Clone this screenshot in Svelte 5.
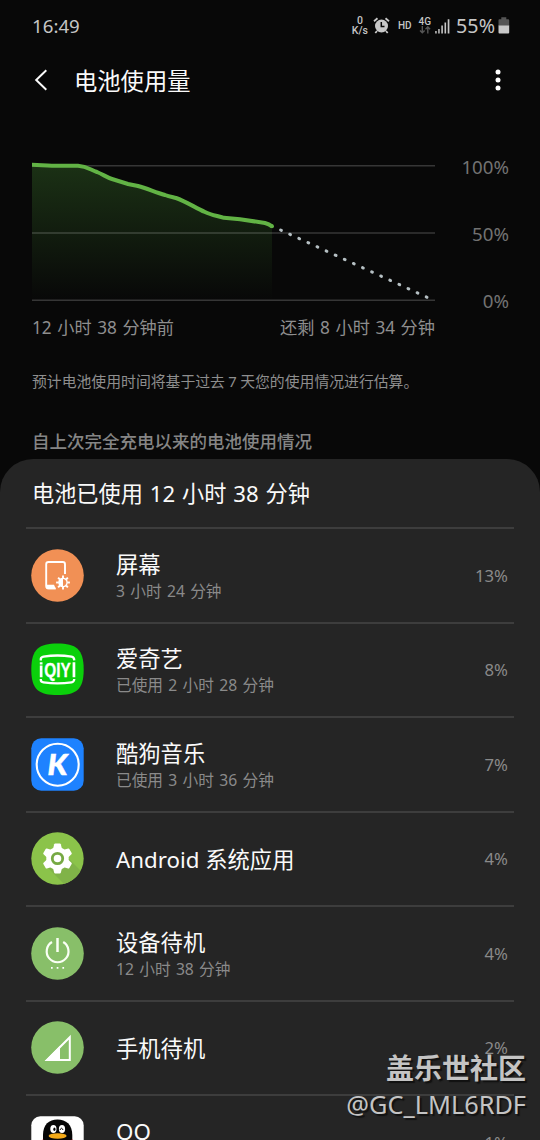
<script lang="ts">
    type Usage = { icon: string; name: string; detail?: string; percent: number };

    const apps: Usage[] = [
        { icon: "screen", name: "屏幕", detail: "3 小时 24 分钟", percent: 13 },
        { icon: "iqiyi", name: "爱奇艺", detail: "已使用 2 小时 28 分钟", percent: 8 },
        { icon: "kugou", name: "酷狗音乐", detail: "已使用 3 小时 36 分钟", percent: 7 },
        { icon: "android", name: "Android 系统应用", percent: 4 },
        { icon: "idle", name: "设备待机", detail: "12 小时 38 分钟", percent: 4 },
        { icon: "cell", name: "手机待机", percent: 2 },
        // blank detail keeps the name on the upper line
        { icon: "qq", name: "QQ", detail: "\u00a0", percent: 1 },
    ];

    const curve =
        "M0 9.8 C8 9.8 12 10.7 20 10.7 L46 10.7 C55 11.2 58 14.5 65 17 C71 19.5 75 22.5 80 24 L96 29 L106 31 C115 33.5 123 37 133 40 C137 41.5 140 42 144 43 C154 46.5 163 52.5 173 57 C179 60 184 60.5 192 62.8 L208 64.2 L233 68 Q237 69 240 71.3";

    const dots = Array.from({ length: 17 }, (_, i) => ({
        x: 249 + i * 9.1,
        y: 75.2 + i * 4.18,
    }));
    const rays = [0, 45, 90, 135, 180, 225, 270, 315];
    const teeth = [0, 60, 120, 180, 240, 300];
</script>

{#snippet appIcon(kind: string)}
    <svg class="icon" viewBox="0 0 53 53">
        {#if kind === "screen"}
            <circle cx="26.5" cy="26.5" r="26.3" fill="#f19055" />
            <path d="M24.5 39.4H17.5Q15.2 39.4 15.2 37V15.3Q15.2 13 17.5 13H31.8Q34 13 34 15.3V25" fill="none" stroke="#fff" stroke-width="1.9" />
            <path d="M15 35.7H23L25 40.3H17.5Q15 40.3 15 37.5Z" fill="#fff" />
            <g transform="translate(32 33.5)">
                {#each rays as angle}
                    <path d="M0 -4.3V-6.9" stroke="#fff" stroke-width="1.9" transform="rotate({angle})" />
                {/each}
                <circle r="4.1" fill="none" stroke="#fff" stroke-width="1.4" />
                <path d="M0 -4.2A4.2 4.2 0 0 0 0 4.2Z" fill="#fff" />
            </g>
        {:else if kind === "iqiyi"}
            <path d="M26.5 0.5C45 .5 52.7 6 52.7 26.5S45 52 26.5 52S.3 47 .3 26.5S8 .5 26.5 .5Z" fill="#0bd00b" />
            <g fill="none" stroke="#fff" stroke-width="2.3">
                <path d="M9.8 17.4V15.8Q10 14.1 12.5 13.6Q26.5 11.4 40.5 13.6Q43.2 14.1 43.3 17.4" />
                <path d="M9.8 36V37.2Q10 39 12.5 39.4Q26.5 41.4 40.5 39.4Q43 39 43.3 36" />
            </g>
            <path d="M8.8 19.2H11.5V21.4H8.8ZM8.8 22.6H11.5V34.2H8.8ZM41.6 19.2H44.3V34.2H41.6Z" fill="#fff" />
            <text class="iqiyi" x="13.3" y="33.8" textLength="26.5" lengthAdjust="spacingAndGlyphs">QIY</text>
        {:else if kind === "kugou"}
            <rect x=".3" y=".3" width="52.4" height="52.4" rx="10" fill="#1e82ff" />
            <circle cx="26.7" cy="26.7" r="21" fill="none" stroke="#fff" stroke-width="2.1" />
            <text class="kugou" x="16.4" y="37.2" textLength="20" lengthAdjust="spacingAndGlyphs">K</text>
        {:else if kind === "android"}
            <clipPath id="android-disc"><circle cx="26.5" cy="26.5" r="26.2" /></clipPath>
            <circle cx="26.5" cy="26.5" r="26.2" fill="#8bc34a" />
            <path d="M16 35L34 53H53V42L38 27Z" fill="#80b348" clip-path="url(#android-disc)" />
            <g transform="translate(26.5 26.5)">
                {#each teeth as angle}
                    <path d="M-4.6 -9L-3.3 -14.2Q-3.1 -15 -2.3 -15H2.3Q3.1 -15 3.3 -14.2L4.6 -9Z" fill="#fff" transform="rotate({angle})" />
                {/each}
                <circle r="11.2" fill="#fff" />
                <circle r="5.2" fill="none" stroke="#76a943" stroke-width="2.8" />
            </g>
        {:else if kind === "idle"}
            <circle cx="26.5" cy="26.5" r="26.3" fill="#88bf69" />
            <g fill="none" stroke="#fafff5" stroke-width="2.2">
                <path d="M26.5 11V25" stroke-width="2.5" />
                <path d="M21 15A10.9 10.9 0 1 0 32.2 15" />
            </g>
            <path d="M20 40h1.7v1.7H20ZM25.7 40h1.7v1.7h-1.7ZM31.4 40h1.7v1.7h-1.7Z" fill="#fff" />
        {:else if kind === "cell"}
            <circle cx="26.5" cy="26.5" r="26.3" fill="#88bf69" />
            <path d="M16 39L38.8 16.2V39Z" fill="none" stroke="#fff" stroke-width="2" />
            <path d="M13.8 40L29 24.8V40Z" fill="#fff" />
        {:else}
            <rect x=".3" y=".3" width="52.4" height="52.4" rx="9" fill="#fff" />
            <path d="M12 29V19C12 8.5 18 3.4 26.5 3.4S41.3 8.5 41.3 19V29Z" fill="#060606" />
            <ellipse cx="22.4" cy="13" rx="3.1" ry="4" fill="#fff" />
            <ellipse cx="31" cy="13" rx="3.1" ry="4" fill="#fff" />
            <ellipse cx="23.4" cy="13.3" rx="1.1" ry="1.7" />
            <path d="M29 14Q30.5 10.5 32 14" fill="none" stroke="#111" />
            <path d="M11.5 23.5Q26.5 28 41.7 23.5V31H11.5Z" fill="#e6151c" />
            <ellipse cx="26.6" cy="20" rx="9" ry="2.7" fill="#f4aa18" />
        {/if}
    </svg>
{/snippet}

<div class="phone">
    <div class="status-bar">
        <span class="clock">16:49</span>
        <div class="indicators">
            <div class="speed"><span>0</span><span>K/s</span></div>
            <svg class="alarm" width="17" height="17" viewBox="0 0 17 17">
                <circle cx="8.5" cy="9" r="6.5" fill="#c8c8c8" />
                <path d="M1 4.3L4.5 1.3M12.5 1.3L16 4.3M4 14L2.3 16M13 14L14.7 16" stroke="#c8c8c8" stroke-width="1.8" />
                <path d="M8.3 5V9.5H11.5" fill="none" stroke="#080808" stroke-width="1.5" />
            </svg>
            <span class="hd">HD</span>
            <div class="network">
                <span>4G</span>
                <svg width="12" height="8" viewBox="0 0 12 8" fill="none" stroke="#555" stroke-width="1.4">
                    <path d="M3.3 0V6.5M1 4.5L3.3 6.8L5.6 4.5M8.8 7.5V1M6.5 3.2L8.8 .9L11.1 3.2" />
                </svg>
            </div>
            <svg class="bars" width="15" height="15" viewBox="0 0 15 15" fill="#c5c5c5">
                <path d="M.2 12h1.5v2.5H.2ZM3.2 10h1.5v4.5H3.2ZM6.3 6.5h1.6v8H6.3ZM9.5 3.5h1.6v11H9.5ZM12.7 .3h1.7v14.2h-1.7Z" />
            </svg>
            <span class="level">55%</span>
            <svg class="battery" width="12" height="17" viewBox="0 0 12 17">
                <path d="M3.3 .3H8.3V2.2H10.3Q11.2 2.2 11.2 3.2V9H.5V3.2Q.5 2.2 1.4 2.2H3.3Z" fill="#555" />
                <path d="M.5 8.6H11.2V15.5Q11.2 16.5 10.2 16.5H1.5Q.5 16.5 .5 15.5Z" fill="#c8c8c8" />
            </svg>
        </div>
    </div>

    <header>
        <svg class="back" width="14" height="22" viewBox="0 0 14 22">
            <path d="M12.3 1.2L2.2 11L12.3 20.8" fill="none" stroke="#fafafa" stroke-width="2" />
        </svg>
        <h1>电池使用量</h1>
        <svg width="6" height="22" viewBox="0 0 6 22" fill="#fff">
            <circle cx="3" cy="3" r="2.5" />
            <circle cx="3" cy="11" r="2.5" />
            <circle cx="3" cy="19" r="2.5" />
        </svg>
    </header>

    <section class="chart">
        <svg width="403" height="150" viewBox="0 0 403 150">
            <defs>
                <linearGradient id="fade" x1="0" y1="0" x2="0" y2="1">
                    <stop offset="0" stop-color="#1b3115" />
                    <stop offset="1" stop-color="#080808" />
                </linearGradient>
            </defs>
            <path d="{curve}V145.2H0Z" fill="url(#fade)" />
            <path d="M0 10.7H403M0 78H403M0 145.2H403" stroke="#fff" stroke-opacity=".19" stroke-width="1.4" />
            <path d={curve} fill="none" stroke="#62b345" stroke-width="4" />
            <circle cx="240" cy="71.3" r="2" fill="#62b345" />
            {#each dots as dot}
                <rect x={dot.x - 1.9} y={dot.y - 1.5} width="3.8" height="3" rx="1.4" fill="#b6c0c4" transform="rotate(24 {dot.x} {dot.y})" />
            {/each}
        </svg>
        <div class="scale">
            <span>100%</span>
            <span>50%</span>
            <span>0%</span>
        </div>
    </section>

    <div class="range">
        <span>12 小时 38 分钟前</span>
        <span>还剩 8 小时 34 分钟</span>
    </div>
    <p class="note">预计电池使用时间将基于过去 7 天您的使用情况进行估算。</p>
    <h2>自上次完全充电以来的电池使用情况</h2>

    <section class="panel">
        <h3>电池已使用 12 小时 38 分钟</h3>
        <ul>
            {#each apps as app}
                <li>
                    {@render appIcon(app.icon)}
                    <div class="info">
                        <span class="name">{app.name}</span>
                        {#if app.detail}
                            <span class="detail">{app.detail}</span>
                        {/if}
                    </div>
                    <span class="percent">{app.percent}%</span>
                </li>
            {/each}
        </ul>
    </section>

    <div class="watermark">
        <strong>盖乐世社区</strong>
        <span>@GC_LML6RDF</span>
    </div>
</div>

<style>
    :global(body) {
        margin: 0;
        background: #080808;
    }

    .phone {
        position: relative;
        width: 540px;
        height: 1140px;
        overflow: hidden;
        background: #080808;
        color: #fafafa;
        font-family: "Noto Sans", "Noto Sans CJK SC", sans-serif;
    }

    svg {
        display: block;
        flex: none;
    }

    h1, h2, h3, p, ul {
        margin: 0;
        padding: 0;
        font-weight: 400;
        white-space: nowrap;
    }

    /* Status bar */
    .status-bar {
        display: flex;
        justify-content: space-between;
        align-items: center;
        box-sizing: border-box;
        height: 52px;
        padding: 0 30px 0 32px;
        color: #c5c5c5;
    }

    .clock,
    .level {
        font-size: 18.7px;
        line-height: 24px;
    }

    .level {
        font-size: 19.7px;
    }

    .indicators {
        display: flex;
        align-items: center;
    }

    .speed {
        display: flex;
        flex-direction: column;
        align-items: center;
        font: 500 10.5px/10px Roboto, sans-serif;
        margin-right: 5px;
    }

    .alarm {
        margin-right: 8px;
        margin-top: -1px;
    }

    .hd {
        font: 500 10px/12px Roboto, sans-serif;
        margin-right: 7px;
        margin-top: -1px;
    }

    .network {
        display: flex;
        flex-direction: column;
        align-items: center;
        font: 500 10px/9px Roboto, sans-serif;
        margin-right: 4px;
        margin-top: -1px;
    }

    .bars {
        margin-right: 6px;
    }

    .battery {
        margin-left: 3px;
        margin-top: -2px;
    }

    /* Title */
    header {
        display: flex;
        align-items: center;
        height: 55px;
        padding: 0 39px 1px 34px;
    }

    h1 {
        flex: 1;
        margin-left: 26px;
        padding-top: 2px;
        font-size: 23.3px;
        line-height: 32px;
    }

    /* Chart */
    .chart {
        display: flex;
        height: 150px;
        padding: 47px 31px 0 32px;
    }

    .scale {
        display: flex;
        flex: 1;
        flex-direction: column;
        align-items: flex-end;
        gap: 43px;
        color: #727272;
        font-size: 18.7px;
        line-height: 24px;
    }

    .range {
        display: flex;
        justify-content: space-between;
        width: 403px;
        height: 26px;
        padding: 9.5px 0 0 32px;
        color: #8e8e8e;
        font-size: 17.2px;
        line-height: 26px;
        word-spacing: 1.1px;
    }

    .note {
        padding: 29.5px 32px 0;
        color: #8e8e8e;
        font-size: 14.85px;
        line-height: 22px;
        word-spacing: -0.5px;
    }

    h2 {
        padding: 35px 32px 0;
        height: 32px;
        color: #858585;
        font-size: 17.5px;
        font-weight: 500;
        line-height: 28px;
    }

    /* Usage list */
    .panel {
        padding: 0 26px;
        border-radius: 33px 33px 0 0;
        background: #252525;
    }

    h3 {
        padding: 0 6px;
        font-size: 22.2px;
        line-height: 70px;
        height: 68px;
        word-spacing: 1.1px;
    }

    li {
        display: flex;
        align-items: center;
        box-sizing: border-box;
        height: 94.5px;
        padding: 0 6px 0 5px;
        border-top: 2px solid #3d3d3d;
    }

    .icon {
        width: 53px;
        height: 53px;
        margin-right: 32px;
    }

    .iqiyi {
        fill: #fff;
        font: 700 20px "Liberation Sans", sans-serif;
        stroke: #fff;
        stroke-width: 0.3px;
    }

    .kugou {
        fill: #fff;
        font: italic 900 29px Lato, sans-serif;
        stroke: #fff;
        stroke-width: 0.5px;
    }

    .info {
        display: flex;
        flex: 1;
        flex-direction: column;
        padding-top: 2px;
    }

    .name {
        font-size: 22.3px;
        line-height: 30px;
    }

    .detail {
        color: #8a8a8a;
        font-size: 15.7px;
        line-height: 23px;
        word-spacing: 1.2px;
    }

    .percent {
        color: #8a8a8a;
        font-size: 16.7px;
    }

    /* Forum stamp over the lower right corner */
    .watermark {
        position: absolute;
        right: 14px;
        bottom: 19px;
        display: flex;
        flex-direction: column;
        align-items: flex-end;
        color: #c4c4c4;
        text-shadow: 2px 2px 1px #111;
    }

    .watermark strong {
        font-size: 28px;
        line-height: 38px;
    }

    .watermark span {
        font: 25.3px/34px "Noto Sans", sans-serif;
    }
</style>
